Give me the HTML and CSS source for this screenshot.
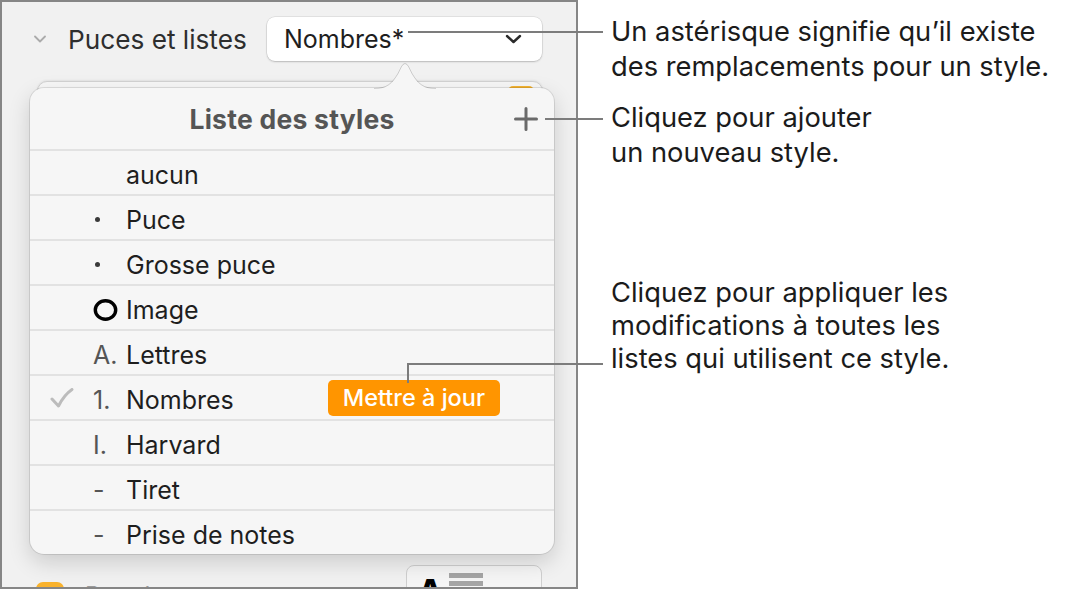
FILE: index.html
```html
<!DOCTYPE html>
<html lang="fr">
<head>
<meta charset="utf-8">
<title>Liste des styles</title>
<link rel="stylesheet" href="styles.css">
</head>
<body>
<div class="stage">
  <section class="panel">
    <div class="head">
      <svg class="disclosure" width="12" height="8" viewBox="0 0 12 8"><path d="M1 1.5 L6 6.5 L11 1.5" fill="none" stroke="#ababab" stroke-width="1.8" stroke-linecap="round" stroke-linejoin="round"/></svg>
      <span class="label">Puces et listes</span>
      <div class="select">
        <span>Nombres*</span>
        <svg width="17" height="10" viewBox="0 0 17 10"><path d="M2 2 L8.5 8 L15 2" fill="none" stroke="#2b2b2b" stroke-width="2.4" stroke-linecap="round" stroke-linejoin="round"/></svg>
      </div>
    </div>

    <div class="underlay"><span class="underlay-tag"></span></div>

    <div class="popover">
      <svg class="arrow" width="62" height="28" viewBox="0 0 62 28">
        <path d="M0 28 C13 28 18 23 24 13 L27.5 6 Q31 0 34.5 6 L38 13 C44 23 49 28 62 28 Z" fill="#f6f6f6"/>
        <path d="M0 27.5 C13 27.5 18 22.5 24 12.5 L27.5 5.5 Q31 -0.5 34.5 5.5 L38 12.5 C44 22.5 49 27.5 62 27.5" fill="none" stroke="rgba(0,0,0,0.16)" stroke-width="1"/>
      </svg>
      <div class="pop-head">
        <span class="pop-title">Liste des styles</span>
        <svg class="plus" width="24" height="24" viewBox="0 0 24 24"><path d="M12 1.5 V22.5 M1.5 12 H22.5" stroke="#6a6a6a" stroke-width="3" stroke-linecap="round"/></svg>
      </div>
      <ul class="styles">
        <li class="row"><span class="check"></span><span class="marker"></span><span class="name">aucun</span></li>
        <li class="row"><span class="check"></span><span class="marker"><span class="dot"></span></span><span class="name">Puce</span></li>
        <li class="row"><span class="check"></span><span class="marker"><span class="dot"></span></span><span class="name">Grosse puce</span></li>
        <li class="row"><span class="check"></span><span class="marker"><svg width="25" height="22" viewBox="0 0 25 22"><ellipse cx="12.5" cy="11" rx="10.2" ry="9.2" fill="none" stroke="#000" stroke-width="3.4"/></svg></span><span class="name">Image</span></li>
        <li class="row"><span class="check"></span><span class="marker mark-text">A.</span><span class="name">Lettres</span></li>
        <li class="row"><span class="check"><svg width="24" height="20" viewBox="0 0 24 20"><path d="M2 11 L8.5 18 Q14 7 22 1.5" fill="none" stroke="#bcbcbc" stroke-width="3" stroke-linecap="round" stroke-linejoin="round"/></svg></span><span class="marker mark-text">1.</span><span class="name">Nombres</span><button class="update">Mettre à jour</button></li>
        <li class="row"><span class="check"></span><span class="marker mark-text">I.</span><span class="name">Harvard</span></li>
        <li class="row"><span class="check"></span><span class="marker mark-text">-</span><span class="name">Tiret</span></li>
        <li class="row"><span class="check"></span><span class="marker mark-text">-</span><span class="name">Prise de notes</span></li>
      </ul>
    </div>

    <div class="foot">
      <span class="checkbox"></span>
      <span class="foot-label">Retrait</span>
      <div class="align-btn">
        <span class="align-a">A</span>
        <span class="align-lines"><span></span><span></span></span>
      </div>
    </div>
  </section>

  <aside class="notes">
    <p class="note note-1">Un astérisque signifie qu’il existe<br>des remplacements pour un style.</p>
    <p class="note note-2">Cliquez pour ajouter<br>un nouveau style.</p>
    <p class="note note-3">Cliquez pour appliquer les<br>modifications à toutes les<br>listes qui utilisent ce style.</p>
  </aside>

  <svg class="leaders" width="1072" height="591" viewBox="0 0 1072 591">
    <path d="M408 32 H603" />
    <path d="M545 119 H603" />
    <path d="M408 383 V364 H603" />
  </svg>
</div>
</body>
</html>
```
FILE: styles.css
```css
* { box-sizing: border-box; }
html, body { margin: 0; padding: 0; background: #fff; }
body {
  font-family: "Inter", "Noto Sans", "Liberation Sans", sans-serif;
  color: #1e1e1e;
}
.stage {
  position: relative;
  width: 1072px;
  height: 591px;
  display: flex;
  align-items: flex-start;
}
.panel {
  position: relative;
  width: 578px;
  height: 589px;
  flex: none;
  border: 2px solid #868686;
  background: #f1f1f1;
  overflow: hidden;
  padding: 15px 0 0 28px;
}
.head {
  display: flex;
  align-items: center;
  width: 512px;
  height: 44px;
}
.disclosure { margin-left: 4px; flex: none; }
.label {
  margin-left: 22px;
  font-size: 26.2px;
  color: #2e2e2e;
  white-space: nowrap;
}
.select {
  margin-left: auto;
  width: 275px;
  height: 44px;
  flex: none;
  background: #fff;
  border-radius: 8px;
  box-shadow: 0 0 0 0.5px rgba(0,0,0,0.12), 0 1px 2px rgba(0,0,0,0.18);
  display: flex;
  align-items: center;
  justify-content: space-between;
  padding: 0 20px 0 17px;
  font-size: 25px;
  color: #1e1e1e;
}
.underlay {
  position: absolute;
  left: 35px;
  top: 79px;
  width: 506px;
  height: 60px;
  background: #f7f7f7;
  border: 1px solid #d2d2d2;
  border-radius: 10px;
  box-shadow: 0 -1px 2px rgba(0,0,0,0.06);
}
.underlay-tag {
  position: absolute;
  right: 8px;
  top: 4px;
  width: 26px;
  height: 12px;
  border-radius: 5px;
  background: #f5b431;
}
.popover {
  position: relative;
  z-index: 1;
  margin-top: 27px;
  width: 524px;
  background: #f6f6f6;
  border-radius: 14px;
  box-shadow: 0 0 0 1px rgba(0,0,0,0.10), 0 8px 22px rgba(0,0,0,0.16);
}
.arrow {
  position: absolute;
  left: 344px;
  top: -27px;
}
.pop-head {
  height: 61px;
  display: grid;
  grid-template-columns: 1fr auto 1fr;
  align-items: center;
}
.pop-title {
  grid-column: 2;
  font-size: 26.5px;
  font-weight: 700;
  color: #555;
  letter-spacing: 0.25px;
}
.plus {
  grid-column: 3;
  justify-self: end;
  margin-right: 16px;
}
.styles {
  list-style: none;
  margin: 0;
  padding: 0;
}
.row {
  height: 45px;
  border-top: 2px solid #e2e2e2;
  display: grid;
  grid-template-columns: 43px 33px auto 1fr;
  align-items: center;
  padding-left: 20px;
  padding-right: 54px;
  font-size: 25px;
  color: #1e1e1e;
}
.name { padding-top: 4px; }
.check { display: flex; align-items: center; }
.marker { display: flex; align-items: center; padding-top: 4px; }
.mark-text { color: #555; }
.dot {
  width: 5px;
  height: 5px;
  border-radius: 50%;
  background: #3a3a3a;
  margin-left: 2px;
}
.update {
  justify-self: end;
  height: 36px;
  padding: 0 15px;
  border: none;
  border-radius: 5px;
  background: #ff9500;
  color: #fff;
  font-family: inherit;
  font-size: 23.5px;
  font-weight: 500;
}
.foot {
  display: flex;
  align-items: flex-start;
  width: 512px;
  margin-top: 11px;
}
.checkbox {
  margin-left: 6px;
  margin-top: 17px;
  width: 28px;
  height: 28px;
  border-radius: 7px;
  background: #f9b22c;
  flex: none;
}
.foot-label {
  margin-left: 21px;
  margin-top: 16px;
  font-size: 24px;
  color: #9a9a9a;
}
.align-btn {
  margin-left: auto;
  width: 136px;
  height: 40px;
  border: 1px solid #cfcfcf;
  border-radius: 8px;
  background: #f5f5f5;
  display: flex;
  align-items: flex-start;
  padding: 6px 0 0 11px;
  gap: 6px;
}
.align-a {
  font-size: 32px;
  font-weight: 800;
  color: #000;
  line-height: 1;
  margin-top: 4px;
}
.align-lines {
  display: flex;
  flex-direction: column;
  gap: 3px;
  padding-top: 1px;
}
.align-lines span {
  display: block;
  width: 34px;
  height: 5px;
  background: #a5a5a5;
}
.notes {
  margin-left: 33px;
  padding-top: 15px;
}
.note {
  margin: 0;
  font-size: 27.3px;
  line-height: 34.5px;
  color: #1b1b1b;
  white-space: nowrap;
}
.note-2 { margin-top: 17px; }
.note-3 { margin-top: 106px; line-height: 33px; }
.leaders {
  position: absolute;
  left: 0;
  top: 0;
  z-index: 2;
  pointer-events: none;
  fill: none;
  stroke: #7c7c7c;
  stroke-width: 2;
}
```
